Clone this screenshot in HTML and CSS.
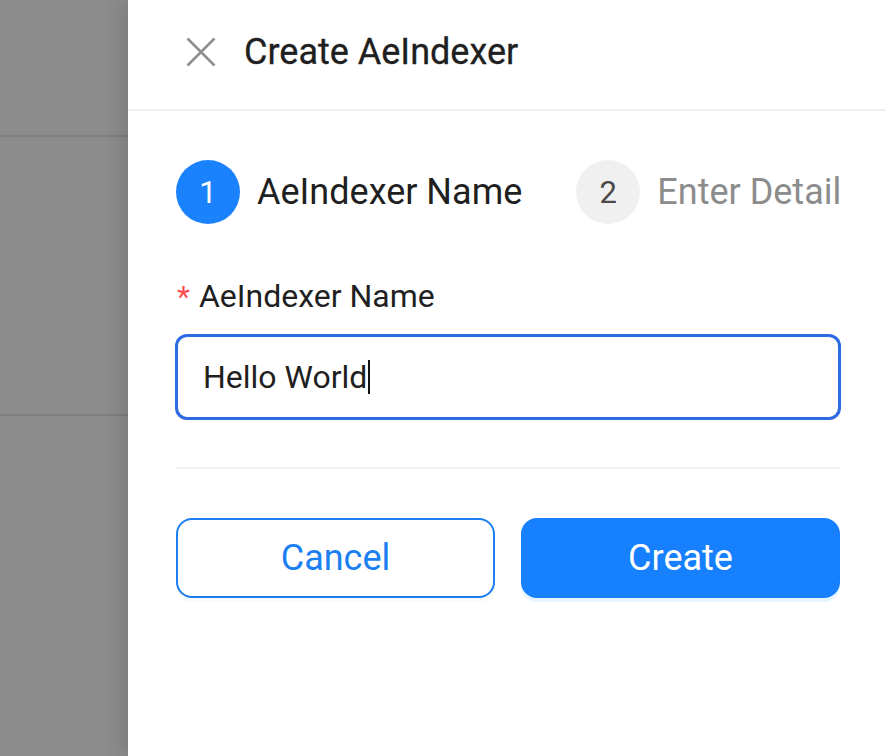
FILE: index.html
```html
<!DOCTYPE html>
<html>
<head>
<meta charset="utf-8">
<link rel="stylesheet" href="styles.css">
</head>
<body>
<div class="page">
  <div class="backdrop">
    <div class="bg-row bg-row-1"></div>
    <div class="bg-row bg-row-2"></div>
    <div class="bg-row bg-row-3"></div>
  </div>
  <div class="drawer">
    <div class="drawer-header">
      <span class="close">
        <svg width="30" height="30" viewBox="0 0 30 30"><path d="M1.5 1.5 L28.5 28.5 M28.5 1.5 L1.5 28.5" stroke="#8f8f8f" stroke-width="2.6" fill="none"/></svg>
      </span>
      <span class="title">Create AeIndexer</span>
    </div>
    <div class="drawer-body">
      <div class="steps">
        <div class="step step-active">
          <span class="step-icon">1</span>
          <span class="step-title">AeIndexer Name</span>
        </div>
        <div class="step step-wait">
          <span class="step-icon">2</span>
          <span class="step-title">Enter Detail</span>
        </div>
      </div>
      <div class="form-label"><span class="req">*</span>AeIndexer Name</div>
      <div class="input"><span class="input-text">Hello World</span><span class="caret"></span></div>
      <div class="divider"></div>
      <div class="actions">
        <button class="btn btn-default">Cancel</button>
        <button class="btn btn-primary">Create</button>
      </div>
    </div>
  </div>
</div>
</body>
</html>
```
FILE: styles.css
```css
html, body {
  margin: 0;
  padding: 0;
}
body {
  font-family: Roboto, "Liberation Sans", sans-serif;
  width: 886px;
  height: 756px;
  overflow: hidden;
}
.page {
  display: flex;
  width: 886px;
  height: 756px;
}
.backdrop {
  width: 128px;
  flex: none;
  background: #8c8c8c;
  display: flex;
  flex-direction: column;
}
.bg-row-1 {
  height: 135px;
  border-bottom: 2px solid #7f7f7f;
}
.bg-row-2 {
  height: 277px;
  border-bottom: 2px solid #7f7f7f;
}
.bg-row-3 {
  flex: 1;
}
.drawer {
  flex: 1;
  min-width: 0;
  background: #fff;
  box-shadow: -6px 0 18px rgba(0, 0, 0, 0.12);
  display: flex;
  flex-direction: column;
  position: relative;
}
.drawer-header {
  height: 109px;
  border-bottom: 2px solid #f0f0f0;
  display: flex;
  align-items: center;
  padding-left: 58px;
}
.close {
  width: 30px;
  height: 30px;
  display: flex;
  margin-right: 28px;
  margin-top: -6px;
}
.title {
  font-size: 36px;
  color: #1f1f1f;
  font-weight: 400;
  margin-top: -6px;
  -webkit-text-stroke: 0.3px #1f1f1f;
  white-space: nowrap;
}
.drawer-body {
  padding: 49px 46px 0 48px;
}
.steps {
  display: flex;
  align-items: center;
  gap: 54px;
  height: 64px;
}
.step {
  display: flex;
  align-items: center;
  gap: 17px;
  flex: none;
}
.step-icon {
  width: 64px;
  height: 64px;
  border-radius: 50%;
  display: flex;
  align-items: center;
  justify-content: center;
  font-size: 31px;
  flex: none;
}
.step-title {
  font-size: 36px;
  white-space: nowrap;
}
.step-active .step-icon {
  background: #1b82fe;
  color: #fff;
}
.step-active .step-title {
  color: #1f1f1f;
}
.step-wait .step-icon {
  background: #f0f0f0;
  color: #4a4a4a;
}
.step-wait .step-title {
  color: #8c8c8c;
}
.form-label {
  margin-top: 52px;
  font-size: 32px;
  color: #1f1f1f;
  height: 40px;
  display: flex;
  align-items: center;
}
.req {
  color: #ff4d4f;
  font-size: 30px;
  margin-right: 9px;
  margin-left: 1px;
}
.input {
  margin-top: 18px;
  margin-left: -1px;
  margin-right: -1px;
  height: 80px;
  border: 3px solid #2c6be0;
  border-radius: 12px;
  display: flex;
  align-items: center;
  padding-left: 25px;
  font-size: 32px;
  color: #1f1f1f;
}
.caret {
  width: 2px;
  height: 34px;
  background: #111;
  margin-left: 1px;
}
.divider {
  margin-top: 47px;
  height: 2px;
  background: #f0f0f0;
}
.actions {
  margin-top: 49px;
  display: flex;
  gap: 26px;
}
.btn {
  flex: 1 1 0;
  min-width: 0;
  box-sizing: border-box;
  height: 80px;
  border-radius: 16px;
  font-family: Roboto, "Liberation Sans", sans-serif;
  font-size: 36px;
  cursor: pointer;
}
.btn-default {
  background: #fff;
  border: 2px solid #1b7ff0;
  color: #1b7ff0;
  box-shadow: 0 4px 0 rgba(0, 0, 0, 0.02);
}
.btn-primary {
  background: #1780ff;
  border: 2px solid #1780ff;
  color: #fff;
  box-shadow: 0 4px 0 rgba(5, 145, 255, 0.1);
}
```
